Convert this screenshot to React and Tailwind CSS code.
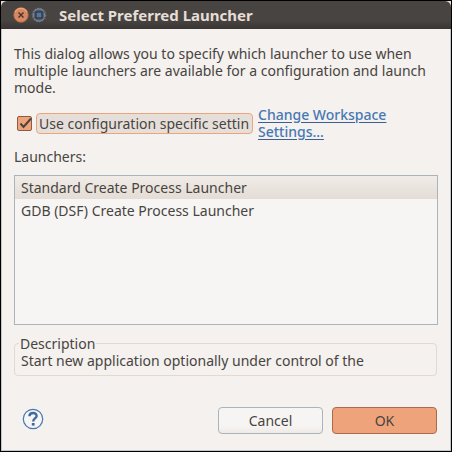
import { useState } from "react";

const launchers = [
  { name: "Standard Create Process Launcher", selected: true },
  { name: "GDB (DSF) Create Process Launcher", selected: false },
];

function TitleBar() {
  return (
    <header className="flex h-7 shrink-0 items-center rounded-t-md bg-linear-to-b from-[#484441] from-70% to-[#393533] pl-3">
      <button type="button" aria-label="Close" className="size-4">
        <svg viewBox="0 0 16 16" className="size-4">
          <circle cx="8" cy="8" r="7.4" fill="#d98761" stroke="#8d5a43" strokeWidth=".8" />
          <path d="M2 5a6.8 6.8 0 0 1 12 0" fill="none" stroke="#f0a57c" strokeWidth="1.2" />
          <path d="M5.5 5.5l5 5M10.5 5.5l-5 5" stroke="#403630" strokeWidth="1.4" />
        </svg>
      </button>
      <button type="button" aria-label="Maximize" className="ml-0.5 size-4">
        <svg viewBox="0 0 16 16" className="size-4">
          <circle cx="8" cy="8" r="6.8" fill="#5b5a5b" stroke="#a0745f" strokeWidth="1" strokeDasharray="1.5 1.5" />
          <path d="M3 4.5a6.2 6.2 0 0 1 10 0M3 11.5a6.2 6.2 0 0 0 10 0M2.5 6v4M13.5 6v4" fill="none" stroke="#5f88bd" strokeWidth="1.2" />
          <rect x="5" y="5" width="6" height="6" fill="#4b78b0" stroke="#353333" strokeWidth="1.2" />
        </svg>
      </button>
      <h1 className="ml-3 text-[15px] font-bold text-[#e6ded7]">Select Preferred Launcher</h1>
    </header>
  );
}

export default function App() {
  const [specific, setSpecific] = useState(true);
  return (
    <div className="flex min-h-screen flex-col border border-black bg-[#e6dfd9] font-['Noto_Sans',sans-serif] text-sm leading-[17px] text-[#484441]">
      <TitleBar />
      <main className="flex flex-1 flex-col border-x border-b border-[#c3c7c8] bg-[#f4f1ee] px-3 pt-4 pb-4">
        <p>
          This dialog allows you to specify which launcher to use when
          <br />
          multiple launchers are available for a configuration and launch
          <br />
          mode.
        </p>

        <div className="mt-2.5 flex items-center">
          <input
            id="specific"
            type="checkbox"
            checked={specific}
            onChange={(e) => setSpecific(e.target.checked)}
            className="peer ml-[3px] size-[15px] shrink-0 appearance-none rounded-xs border border-[#8d5a43] bg-[#efa37a]"
          />
          <svg viewBox="0 0 15 15" className="pointer-events-none invisible -ml-[15px] size-[15px] shrink-0 overflow-visible peer-checked:visible">
            <path d="M3.5 7.5l3 3.5L14 2.5" fill="none" stroke="#484441" strokeWidth="2" />
          </svg>
          <label
            htmlFor="specific"
            className="ml-1 h-[21px] w-[217px] shrink-0 rounded-sm border border-[#efa37a] bg-[#e6dfd9] pl-0.5 leading-[19px] whitespace-nowrap"
          >
            Use configuration specific settin
          </label>
          <a href="#workspace" className="ml-[5px] font-medium text-[#4878b4] underline decoration-[#3d5f90] underline-offset-2">
            Change Workspace
            <br />
            Settings...
          </a>
        </div>

        <h2 id="launchers" className="mt-2">Launchers:</h2>
        <ul
          role="listbox"
          aria-labelledby="launchers"
          className="mt-2.5 min-h-[150px] flex-1 border border-[#a9b5ba] bg-[#f7f5f3]"
        >
          {launchers.map((l) => (
            <li
              key={l.name}
              role="option"
              aria-selected={l.selected}
              className="px-1.5 leading-[23px] aria-selected:bg-linear-to-b aria-selected:from-[#f1ece8] aria-selected:to-[#e4dcd5]"
            >
              {l.name}
            </li>
          ))}
        </ul>

        <fieldset className="mt-2.5 mr-px h-[41px] rounded-sm border border-[#e2d9d2] px-1">
          <legend className="px-px">Description</legend>
          <p className="px-0.5">Start new application optionally under control of the</p>
        </fieldset>

        <footer className="mt-[31px] mr-px flex items-start">
          <button type="button" aria-label="Help" className="mt-px ml-2 size-[22px]">
            <svg viewBox="0 0 22 22" className="size-[22px]">
              <circle cx="11" cy="11" r="9.7" fill="#f7f5f3" stroke="#4878b4" strokeWidth="1.2" />
              <path d="M7.4 8.2c.2-4.4 7.4-4.2 7.2-.2-.1 2.4-3.4 2.6-3.4 5.4" fill="none" stroke="#41699f" strokeWidth="2.4" />
              <rect x="9.8" y="15" width="2.8" height="2.6" fill="#41699f" />
            </svg>
          </button>
          <button type="button" className="ml-auto h-[27px] w-[105px] rounded-sm border border-[#a9b5ba] bg-linear-to-b from-[#f7f5f3] from-70% to-[#efeae6]">
            Cancel
          </button>
          <button type="button" className="ml-[9px] h-[27px] w-[105px] rounded-sm border border-[#a96b4e] bg-[#efa37a]">
            OK
          </button>
        </footer>
      </main>
    </div>
  );
}
